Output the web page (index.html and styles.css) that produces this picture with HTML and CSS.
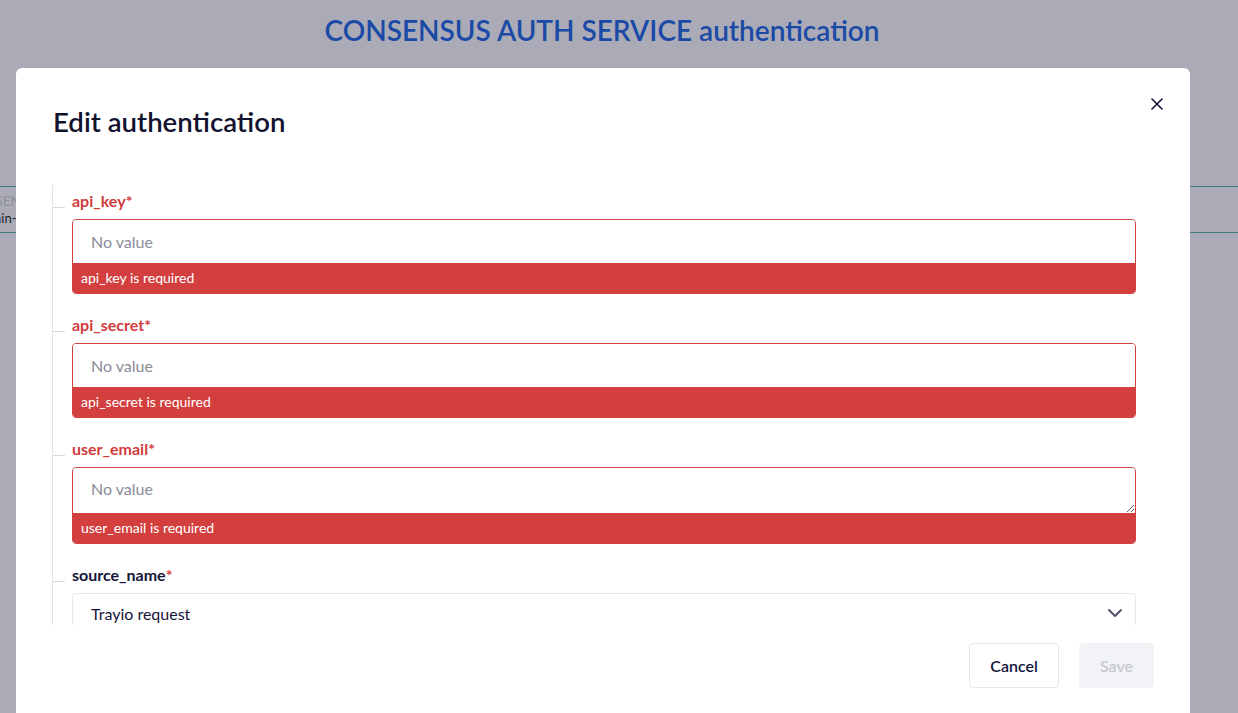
FILE: index.html
```html
<!DOCTYPE html>
<html lang="en">

<head>
    <meta charset="UTF-8">
    <title>Edit authentication</title>
    <link rel="stylesheet" href="styles.css">
</head>

<body>
    <div class="page">
        <h1 class="page-title">CONSENSUS AUTH SERVICE authentication</h1>
        <div class="auth-row">
            <div class="auth-cell">
                <span class="auth-type">CONSENSUS</span>
                <span class="auth-name">Domain-Trayio</span>
            </div>
        </div>
    </div>

    <div class="modal">
        <div class="modal-head">
            <h2>Edit authentication</h2>
            <button class="close-button" aria-label="Close">
                <svg width="12" height="12" viewBox="0 0 12 12">
                    <path d="M1 1 L11 11 M11 1 L1 11" stroke="#14143a" stroke-width="1.6" stroke-linecap="round" />
                </svg>
            </button>
        </div>

        <div class="form-scroll">
            <div class="field">
                <label class="field-label error">api_key<span class="req">*</span></label>
                <div class="input-box invalid">
                    <input type="text" placeholder="No value">
                    <div class="error-bar">api_key is required</div>
                </div>
            </div>

            <div class="field">
                <label class="field-label error">api_secret<span class="req">*</span></label>
                <div class="input-box invalid">
                    <input type="text" placeholder="No value">
                    <div class="error-bar">api_secret is required</div>
                </div>
            </div>

            <div class="field">
                <label class="field-label error">user_email<span class="req">*</span></label>
                <div class="input-box invalid">
                    <textarea rows="1" placeholder="No value"></textarea>
                    <div class="error-bar">user_email is required</div>
                </div>
            </div>

            <div class="field">
                <label class="field-label">source_name<span class="req">*</span></label>
                <div class="select-box">
                    <span>Trayio request</span>
                    <svg width="16" height="10" viewBox="0 0 16 10">
                        <path d="M2 2 L8 8 L14 2" fill="none" stroke="#4a4a66" stroke-width="1.8" stroke-linecap="round" stroke-linejoin="round" />
                    </svg>
                </div>
            </div>
        </div>

        <div class="modal-foot">
            <button class="btn btn-cancel">Cancel</button>
            <button class="btn btn-save" disabled>Save</button>
        </div>
    </div>
</body>

</html>
```

FILE: styles.css
```css
body {
    font-family: Lato, "Noto Sans", sans-serif;
    background-color: #aaabb7;
    margin: 0;
    height: 713px;
    overflow: hidden;
}

.page {
    padding-top: 14px;
}

.page-title {
    margin: 0;
    text-align: center;
    font-size: 28px;
    font-weight: 600;
    color: #1a4aa6;
    line-height: 32px;
    padding-right: 34px;
}

.auth-row {
    margin-top: 140px;
    border-top: 1px solid #3f7d78;
    border-bottom: 1px solid #3f7d78;
    height: 45px;
}

.auth-cell {
    display: flex;
    flex-direction: column;
    font-size: 13px;
    line-height: 17px;
    padding-top: 6px;
    margin-left: -33px;
}

.auth-type {
    color: #8d8e99;
}

.auth-name {
    color: #1c1c24;
}

.modal {
    position: absolute;
    left: 16px;
    top: 68px;
    width: 1174px;
    height: 660px;
    background: #fff;
    border-radius: 6px;
    box-sizing: border-box;
}

.modal-head {
    display: flex;
    justify-content: space-between;
    align-items: flex-start;
    padding: 36px 27px 0 37px;
}

.modal-head h2 {
    margin: 0;
    font-size: 27.6px;
    font-weight: 600;
    color: #12122e;
    line-height: 36px;
}

.close-button {
    background: none;
    border: none;
    padding: 0;
    margin-top: -6px;
    width: 12px;
    height: 12px;
    display: flex;
}

.form-scroll {
    margin: 45px 0 0 36px;
    width: 1084px;
    height: 440px;
    overflow: hidden;
    border-left: 1px solid #e3e3e8;
    padding-top: 6px;
    box-sizing: border-box;
}

.field {
    margin-bottom: 21px;
}

.field-label {
    display: flex;
    align-items: center;
    font-size: 16px;
    font-weight: 700;
    color: #14143a;
    line-height: 20px;
    margin-bottom: 8px;
}

.field-label::before {
    content: "";
    width: 12px;
    height: 1px;
    background: #d8d8de;
    margin-right: 7px;
    margin-top: 12px;
}

.field-label.error {
    color: #d23b3c;
}

.req {
    color: #d23b3c;
}

.input-box {
    margin-left: 19px;
    border-radius: 4px;
    overflow: hidden;
}

.input-box.invalid {
    border: 1px solid #d5403f;
}

.input-box input,
.input-box textarea {
    display: block;
    width: 100%;
    height: 43px;
    border: none;
    outline: none;
    padding: 0 18px;
    font-family: inherit;
    font-size: 16px;
    box-sizing: border-box;
    color: #14143a;
}

.input-box textarea {
    height: 45px;
    padding-top: 11px;
    resize: vertical;
}

.input-box ::placeholder {
    color: #8a8c98;
}

.error-bar {
    background: #d33f3f;
    color: #fff;
    font-size: 14px;
    height: 30px;
    line-height: 30px;
    padding-left: 8px;
}

.select-box {
    margin-left: 19px;
    height: 44px;
    border: 1px solid #e6e6eb;
    border-radius: 4px;
    display: flex;
    align-items: center;
    justify-content: space-between;
    padding: 0 12px 4px 18px;
    box-sizing: border-box;
    font-size: 16px;
    color: #14143a;
}

.modal-foot {
    display: flex;
    justify-content: flex-end;
    gap: 20px;
    padding: 18px 36px 0 0;
}

.btn {
    height: 45px;
    border-radius: 4px;
    font-family: inherit;
    font-size: 16px;
    font-weight: 600;
    padding: 0 20px;
}

.btn-cancel {
    background: #fff;
    border: 1px solid #e6e6eb;
    color: #14143a;
}

.btn-save {
    background: #f2f3f6;
    border: 1px solid #f2f3f6;
    color: #c6c8d0;
}
```
